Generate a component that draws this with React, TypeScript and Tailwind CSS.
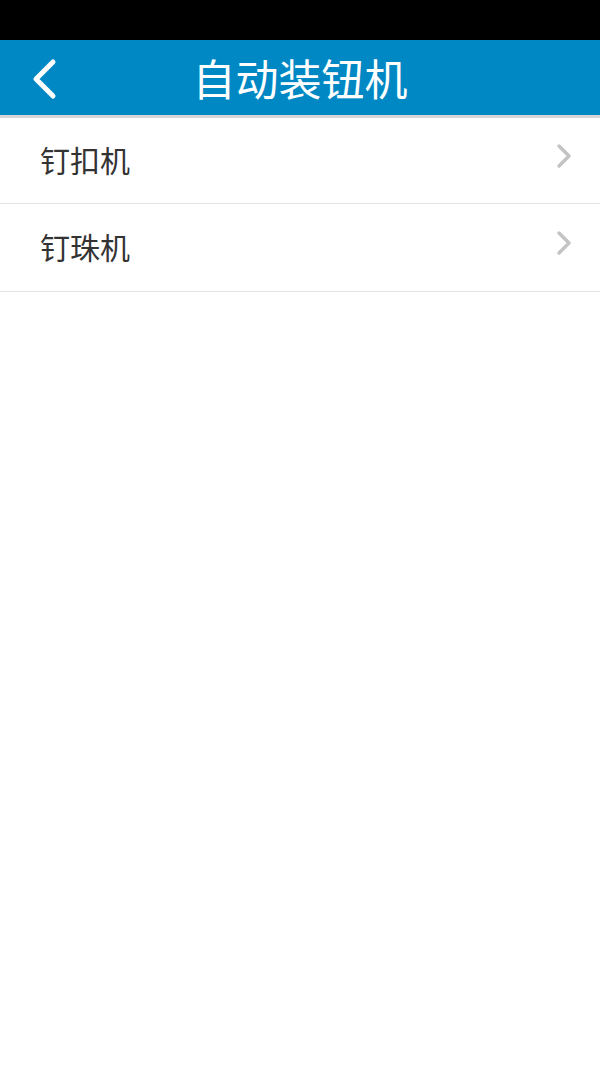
const font = { fontFamily: '"Noto Sans CJK SC", "Liberation Sans", sans-serif' }

const items = [
  { name: '钉扣机', h: 'h-[86px]' },
  { name: '钉珠机', h: 'h-[88px]' },
]

export default function App() {
  return (
    <div className="w-[600px] h-[1067px] bg-white flex flex-col" style={font}>
      {/* status bar */}
      <div className="h-[40px] bg-black" />

      {/* header */}
      <div className="relative h-[75px] bg-[#0088c4] flex items-center justify-center">
        <svg className="absolute left-[27px] top-[18px]" width="32" height="42" viewBox="0 0 32 42">
          <path d="M26 4 L9 21 L26 38" fill="none" stroke="white" strokeWidth="5" strokeLinecap="round" strokeLinejoin="round" />
        </svg>
        <span className="text-[43px] leading-none text-white">自动装钮机</span>
      </div>
      <div className="h-[3px] bg-[#d6d6d6]" />

      {/* list */}
      <div className="flex flex-col">
        {items.map(item => (
          <div key={item.name} className={`${item.h} flex items-center justify-between pl-[40px] pr-[28px] border-b border-[#e4e4e4]`}>
            <span className="text-[30px] text-[#333333] leading-none -mt-[4px]">{item.name}</span>
            <svg width="16" height="26" viewBox="0 0 16 26" className="-mt-[10px]">
              <path d="M3 3 L13 13 L3 23" fill="none" stroke="#c4c4c4" strokeWidth="3.5" strokeLinecap="round" strokeLinejoin="round" />
            </svg>
          </div>
        ))}
      </div>
    </div>
  )
}
